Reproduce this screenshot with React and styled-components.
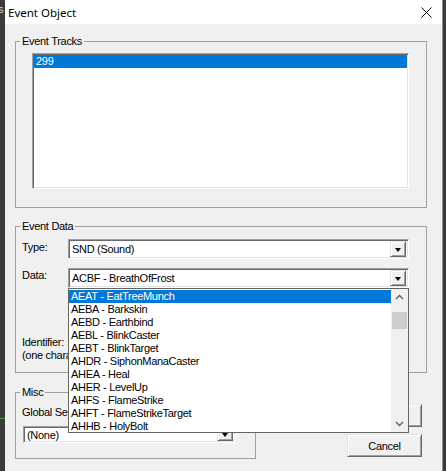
import React from "react";
import styled, { createGlobalStyle, css } from "styled-components";

const GlobalStyle = createGlobalStyle`
  body {
    margin: 0;
    background: #3b3b3b;
    font-family: "Liberation Sans", Arial, sans-serif;
    font-size: 11px;
    letter-spacing: -0.3px;
  }
`;

const sunken = css`
  border: 1px solid;
  border-color: #a0a0a0 #ffffff #ffffff #a0a0a0;
  box-shadow: inset 1px 1px #696969, inset -1px -1px #e3e3e3;
`;

const raised = css`
  border: 1px solid;
  border-color: #e3e3e3 #696969 #696969 #e3e3e3;
  box-shadow: inset 1px 1px #ffffff, inset -1px -1px #a0a0a0;
`;

const Screen = styled.div`
  display: flex;
  width: 446px;
  height: 471px;
  overflow: hidden;
  background: #3b3b3b;
`;

const LeftStrip = styled.div`
  width: 5px;
  display: flex;
  flex-direction: column;
  overflow: hidden;
`;

const StrayGlyph = styled.span`
  color: #d8d8d8;
  font-size: 11px;
  line-height: 11px;
  margin: 4px 0 0 -2px;
`;

const GreenLine = styled.div`
  height: 1px;
  background: #3c9a3c;
  margin-top: 403px;
`;

const Dialog = styled.div`
  width: 437px;
  display: flex;
  flex-direction: column;
  background: #f0f0f0;
  border-right: 1px solid #8c8c8c;
`;

const TitleBar = styled.div`
  height: 24px;
  flex-shrink: 0;
  background: #ffffff;
  display: flex;
  align-items: center;
  justify-content: space-between;
  padding: 0 10px 0 3px;
`;

const TitleText = styled.span`
  font-family: "Noto Sans", "Open Sans", sans-serif;
  font-size: 11.5px;
  letter-spacing: 0;
  color: #000;
`;

const Body = styled.div`
  flex: 1;
  padding: 11px 15px 0 10px;
  display: flex;
  flex-direction: column;
`;

const Group = styled.fieldset`
  margin: ${(p) => p.$top || 0}px 0 0 0;
  padding: 0;
  min-width: 0;
  border: 1px solid #a0a0a0;
  width: ${(p) => (p.$width ? `${p.$width}px` : "auto")};
  box-sizing: border-box;
`;

const Legend = styled.legend`
  margin-left: 4px;
  padding: 0 2px;
  font-size: 11px;
  line-height: 13px;
  color: #000;
`;

const GroupContent = styled.div`
  padding: ${(p) => p.$pad};
`;

const ListBox = styled.div`
  ${sunken};
  background: #fff;
  height: 136px;
  box-sizing: border-box;
  padding: 1px;
`;

const ListRow = styled.div`
  height: 13px;
  line-height: 13px;
  padding-left: 2px;
  color: ${(p) => (p.$selected ? "#fff" : "#000")};
  background: ${(p) => (p.$selected ? "#0078d7" : "transparent")};
  white-space: nowrap;
  overflow: hidden;
`;

const FieldRow = styled.div`
  display: grid;
  grid-template-columns: 46px 1fr;
  align-items: start;
  margin-top: ${(p) => p.$top || 0}px;
`;

const Label = styled.div`
  line-height: 13px;
  padding-top: ${(p) => p.$offset || 0}px;
  color: #000;
  white-space: nowrap;
  overflow: hidden;
  max-width: ${(p) => (p.$clip ? `${p.$clip}px` : "none")};
`;

const ComboWrap = styled.div`
  position: relative;
  width: ${(p) => (p.$width ? `${p.$width}px` : "auto")};
  margin: ${(p) => p.$margin || 0};
`;

const Combo = styled.div`
  ${sunken};
  box-sizing: border-box;
  height: ${(p) => p.$height || 20}px;
  background: #fff;
  display: flex;
  align-items: center;
  justify-content: space-between;
  padding: 0 2px 0 3px;
  color: #000;
`;

const ComboButton = styled.div`
  ${raised};
  box-sizing: border-box;
  width: 16px;
  height: ${(p) => p.$height || 16}px;
  background: #f0f0f0;
  display: flex;
  align-items: center;
  justify-content: center;
`;

const Arrow = styled.div`
  width: 0;
  height: 0;
  border-left: 3.5px solid transparent;
  border-right: 3.5px solid transparent;
  border-top: 4px solid #000;
  margin-top: 1px;
`;

const DropList = styled.div`
  position: absolute;
  top: 100%;
  left: 0;
  right: 0;
  height: 145px;
  box-sizing: border-box;
  border: 1px solid #646464;
  background: #fff;
  display: flex;
  z-index: 5;
`;

const DropItems = styled.div`
  flex: 1;
  padding-top: 1px;
  overflow: hidden;
`;

const ScrollBar = styled.div`
  width: 17px;
  background: #f0f0f0;
  display: flex;
  flex-direction: column;
  align-items: center;
`;

const ScrollArrow = styled.div`
  height: 16px;
  display: flex;
  align-items: center;
  justify-content: center;
`;

const Thumb = styled.div`
  width: 15px;
  height: 17px;
  background: #cdcdcd;
  margin-top: 7px;
  flex-shrink: 0;
`;

const Spacer = styled.div`
  flex: 1;
`;

const BottomRow = styled.div`
  display: flex;
  justify-content: space-between;
  align-items: flex-start;
  margin-top: 13px;
`;

const ButtonColumn = styled.div`
  display: flex;
  flex-direction: column;
  gap: 7px;
  margin: 18px 5px 0 0;
`;

const Button = styled.div`
  ${raised};
  box-sizing: border-box;
  width: 75px;
  height: 23px;
  background: #f0f0f0;
  display: flex;
  align-items: center;
  justify-content: center;
  color: #000;
`;

const Chevron = ({ up }) => (
  <svg width="9" height="6" viewBox="0 0 9 6">
    <path
      d={up ? "M1 5 L4.5 1.5 L8 5" : "M1 1 L4.5 4.5 L8 1"}
      fill="none"
      stroke="#606060"
      strokeWidth="1.4"
    />
  </svg>
);

const CloseIcon = () => (
  <svg width="11" height="11" viewBox="0 0 11 11">
    <path d="M0.5 0.5 L10.5 10.5 M10.5 0.5 L0.5 10.5" stroke="#000" strokeWidth="1" />
  </svg>
);

const dataItems = [
  "AEAT - EatTreeMunch",
  "AEBA - Barkskin",
  "AEBD - Earthbind",
  "AEBL - BlinkCaster",
  "AEBT - BlinkTarget",
  "AHDR - SiphonManaCaster",
  "AHEA - Heal",
  "AHER - LevelUp",
  "AHFS - FlameStrike",
  "AHFT - FlameStrikeTarget",
  "AHHB - HolyBolt",
];

export default function App() {
  return (
    <>
      <GlobalStyle />
      <Screen>
        <LeftStrip>
          <StrayGlyph>s</StrayGlyph>
          <GreenLine />
        </LeftStrip>
        <Dialog>
          <TitleBar>
            <TitleText>Event Object</TitleText>
            <CloseIcon />
          </TitleBar>
          <Body>
            <Group>
              <Legend>Event Tracks</Legend>
              <GroupContent $pad="5px 17px 18px 16px">
                <ListBox>
                  <ListRow $selected>299</ListRow>
                </ListBox>
              </GroupContent>
            </Group>

            <Group $top={12}>
              <Legend>Event Data</Legend>
              <GroupContent $pad="6px 17px 10px 6px">
                <FieldRow>
                  <Label $offset={2}>Type:</Label>
                  <Combo>
                    <span>SND (Sound)</span>
                    <ComboButton>
                      <Arrow />
                    </ComboButton>
                  </Combo>
                </FieldRow>
                <FieldRow $top={9}>
                  <Label $offset={1}>Data:</Label>
                  <ComboWrap>
                    <Combo>
                      <span>ACBF - BreathOfFrost</span>
                      <ComboButton>
                        <Arrow />
                      </ComboButton>
                    </Combo>
                    <DropList>
                      <DropItems>
                        {dataItems.map((item, i) => (
                          <ListRow key={item} $selected={i === 0}>
                            {item}
                          </ListRow>
                        ))}
                      </DropItems>
                      <ScrollBar>
                        <ScrollArrow>
                          <Chevron up />
                        </ScrollArrow>
                        <Thumb />
                        <Spacer />
                        <ScrollArrow>
                          <Chevron />
                        </ScrollArrow>
                      </ScrollBar>
                    </DropList>
                  </ComboWrap>
                </FieldRow>
                <FieldRow $top={48}>
                  <Label $clip={46}>
                    Identifier:
                    <br />
                    (one character)
                  </Label>
                </FieldRow>
              </GroupContent>
            </Group>

            <BottomRow>
              <Group $width={241}>
                <Legend>Misc</Legend>
                <GroupContent $pad="7px 0 15px 6px">
                  <Label $clip={46}>Global Sequence:</Label>
                  <ComboWrap $width={213} $margin="7px 0 0 1px">
                    <Combo $height={17}>
                      <span>(None)</span>
                      <ComboButton $height={13}>
                        <Arrow />
                      </ComboButton>
                    </Combo>
                  </ComboWrap>
                </GroupContent>
              </Group>
              <ButtonColumn>
                <Button>OK</Button>
                <Button>Cancel</Button>
              </ButtonColumn>
            </BottomRow>
          </Body>
        </Dialog>
      </Screen>
    </>
  );
}
